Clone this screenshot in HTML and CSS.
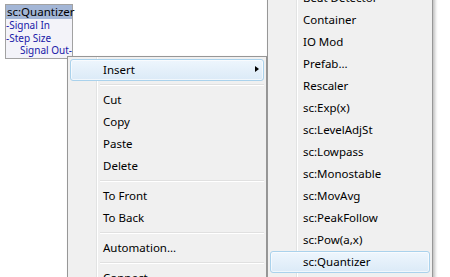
FILE: index.html
```html
<!DOCTYPE html>
<html lang="en">
<head>
    <meta charset="UTF-8">
    <title>sc:Quantizer - context menu</title>
    <link rel="stylesheet" href="styles.css">
</head>
<body>
    <div class="canvas">
        <div class="node">
            <div class="node-title">sc:Quantizer</div>
            <div class="node-body">
                <div class="pin in">-Signal In</div>
                <div class="pin in">-Step Size</div>
                <div class="pin out">Signal Out-</div>
            </div>
        </div>

        <div class="menu main-menu">
            <div class="item active has-sub">Insert<span class="arrow"></span></div>
            <div class="sep"></div>
            <div class="item">Cut</div>
            <div class="item">Copy</div>
            <div class="item">Paste</div>
            <div class="item">Delete</div>
            <div class="sep"></div>
            <div class="item">To Front</div>
            <div class="item">To Back</div>
            <div class="sep"></div>
            <div class="item">Automation...</div>
            <div class="sep"></div>
            <div class="item">Connect</div>
        </div>

        <div class="menu sub-menu">
            <div class="item">Beat Detector</div>
            <div class="item">Container</div>
            <div class="item">IO Mod</div>
            <div class="item">Prefab...</div>
            <div class="item">Rescaler</div>
            <div class="item">sc:Exp(x)</div>
            <div class="item">sc:LevelAdjSt</div>
            <div class="item">sc:Lowpass</div>
            <div class="item">sc:Monostable</div>
            <div class="item">sc:MovAvg</div>
            <div class="item">sc:PeakFollow</div>
            <div class="item">sc:Pow(a,x)</div>
            <div class="item active">sc:Quantizer</div>
            <div class="item">sc:Sample&amp;Hold</div>
        </div>
    </div>
</body>
</html>
```

FILE: styles.css
```css
body {
    margin: 0;
    background: #fff;
    font-family: 'Noto Sans', sans-serif;
    overflow: hidden;
}

.canvas {
    position: relative;
    width: 450px;
    height: 277px;
    overflow: hidden;
}

/* node on the patch canvas */
.node {
    position: absolute;
    left: 5px;
    top: 4px;
    width: 66px;
    border: 1px solid #a2a2a2;
    background: #f3f3f9;
}

.node-title {
    height: 14px;
    line-height: 14px;
    background: #a3b6d6;
    color: #000;
    font-size: 11.5px;
    padding-left: 1px;
    white-space: nowrap;
}

.node-body {
    padding-bottom: 1px;
}

.pin {
    font-size: 10px;
    line-height: 12.5px;
    color: #1818a8;
}

.pin.out {
    text-align: right;
}

/* popup menus */
.menu {
    position: absolute;
    background: #f0f0f0;
    border: 1px solid #979797;
    padding: 2px;
    font-size: 11.5px;
    color: #000;
    box-shadow: 2px 2px 3px rgba(0, 0, 0, 0.25);
    background-image: linear-gradient(to right,
        transparent 28px, #e2e3e3 28px, #e2e3e3 29px,
        #ffffff 29px, #ffffff 30px, transparent 30px);
}

.main-menu {
    left: 67px;
    top: 56px;
    width: 194px;
}

.sub-menu {
    left: 267px;
    top: -16px;
    width: 160px;
}

.item {
    position: relative;
    height: 22px;
    line-height: 19px;
    padding-left: 32px;
    border: 1px solid transparent;
    border-radius: 3px;
    box-sizing: border-box;
    white-space: nowrap;
}

.item.active {
    border-color: #aad2ec;
    background: linear-gradient(#eef6fd, #dbeaf7);
    box-shadow: inset 0 0 0 1px rgba(255, 255, 255, 0.6);
}

.arrow {
    position: absolute;
    right: 4px;
    top: 6px;
    width: 0;
    height: 0;
    border-top: 3.5px solid transparent;
    border-bottom: 3.5px solid transparent;
    border-left: 4px solid #000;
}

.sep {
    height: 8px;
    margin-left: 30px;
    background: linear-gradient(transparent 3px, #e0e0e0 3px, #e0e0e0 4px,
        #ffffff 4px, #ffffff 5px, transparent 5px);
}
```
